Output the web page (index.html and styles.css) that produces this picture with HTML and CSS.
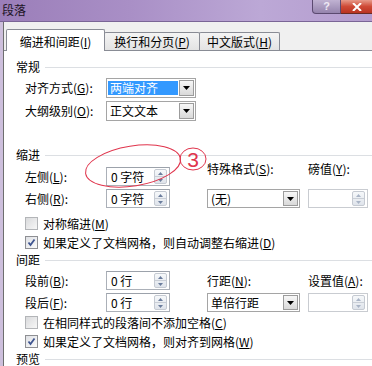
FILE: index.html
```html
<!DOCTYPE html>
<html lang="zh-CN">
<head>
  <meta charset="UTF-8">
  <title>段落</title>
  <link rel="stylesheet" href="styles.css">
</head>
<body>

  <div class="window">
    <div class="titlebar">
      <span class="title">段落</span>
      <div class="caption">
        <span class="btn-help">?</span>
        <span class="btn-close">
          <svg width="10" height="8" viewBox="0 0 10 8"><path d="M1 0 L9 8 M9 0 L1 8" stroke="#fff" stroke-width="2"/></svg>
        </span>
      </div>
    </div>

    <div class="frame">
      <div class="client">
        <!-- tabs -->
        <div class="tabs">
          <div class="tab active tab1">缩进和间距(<u>I</u>)</div>
          <div class="tab tab2">换行和分页(<u>P</u>)</div>
          <div class="tab tab3">中文版式(<u>H</u>)</div>
        </div>

        <div class="panel">
          <div class="group-title">常规</div>
          <div class="form-grid general">
            <span class="label">对齐方式(<u>G</u>):</span>
            <div class="combo">
              <span class="combo-text sel">两端对齐</span>
              <span class="combo-btn"><svg width="7" height="4" viewBox="0 0 7 4"><path d="M0 0 H7 L3.5 4 Z" fill="#000"/></svg></span>
            </div>
            <span class="label">大纲级别(<u>O</u>):</span>
            <div class="combo">
              <span class="combo-text">正文文本</span>
              <span class="combo-btn"><svg width="7" height="4" viewBox="0 0 7 4"><path d="M0 0 H7 L3.5 4 Z" fill="#000"/></svg></span>
            </div>
          </div>

          <div class="group-title gap-indent">缩进</div>
          <div class="form-grid wide indent">
            <span class="label">左侧(<u>L</u>):</span>
            <div class="spin">
              <span class="spin-text">0 字符</span>
              <span class="spin-btns">
                <span><svg width="5" height="3" viewBox="0 0 5 3"><path d="M0 3 H5 L2.5 0 Z" fill="#6a7c9c"/></svg></span>
                <span><svg width="5" height="3" viewBox="0 0 5 3"><path d="M0 0 H5 L2.5 3 Z" fill="#6a7c9c"/></svg></span>
              </span>
            </div>
            <span class="label c4 raised">特殊格式(<u>S</u>):</span>
            <span class="label c6 raised">磅值(<u>Y</u>):</span>

            <span class="label">右侧(<u>R</u>):</span>
            <div class="spin">
              <span class="spin-text">0 字符</span>
              <span class="spin-btns">
                <span><svg width="5" height="3" viewBox="0 0 5 3"><path d="M0 3 H5 L2.5 0 Z" fill="#6a7c9c"/></svg></span>
                <span><svg width="5" height="3" viewBox="0 0 5 3"><path d="M0 0 H5 L2.5 3 Z" fill="#6a7c9c"/></svg></span>
              </span>
            </div>
            <div class="combo c4">
              <span class="combo-text">(无)</span>
              <span class="combo-btn"><svg width="7" height="4" viewBox="0 0 7 4"><path d="M0 0 H7 L3.5 4 Z" fill="#000"/></svg></span>
            </div>
            <div class="spin empty c6">
              <span class="spin-text"></span>
              <span class="spin-btns">
                <span><svg width="5" height="3" viewBox="0 0 5 3"><path d="M0 3 H5 L2.5 0 Z" fill="#a9b4c6"/></svg></span>
                <span><svg width="5" height="3" viewBox="0 0 5 3"><path d="M0 0 H5 L2.5 3 Z" fill="#a9b4c6"/></svg></span>
              </span>
            </div>
          </div>

          <div class="check-row first">
            <span class="check"></span>
            <span>对称缩进(<u>M</u>)</span>
          </div>
          <div class="check-row">
            <span class="check checked"><svg width="9" height="9" viewBox="0 0 9 9"><path d="M1.5 4.5 L3.5 7 L7.5 1.5" fill="none" stroke="#3f5590" stroke-width="1.8"/></svg></span>
            <span>如果定义了文档网格，则自动调整右缩进(<u>D</u>)</span>
          </div>

          <div class="group-title">间距</div>
          <div class="form-grid wide spacing">
            <span class="label">段前(<u>B</u>):</span>
            <div class="spin">
              <span class="spin-text">0 行</span>
              <span class="spin-btns">
                <span><svg width="5" height="3" viewBox="0 0 5 3"><path d="M0 3 H5 L2.5 0 Z" fill="#6a7c9c"/></svg></span>
                <span><svg width="5" height="3" viewBox="0 0 5 3"><path d="M0 0 H5 L2.5 3 Z" fill="#6a7c9c"/></svg></span>
              </span>
            </div>
            <span class="label c4">行距(<u>N</u>):</span>
            <span class="label c6">设置值(<u>A</u>):</span>

            <span class="label">段后(<u>F</u>):</span>
            <div class="spin">
              <span class="spin-text">0 行</span>
              <span class="spin-btns">
                <span><svg width="5" height="3" viewBox="0 0 5 3"><path d="M0 3 H5 L2.5 0 Z" fill="#6a7c9c"/></svg></span>
                <span><svg width="5" height="3" viewBox="0 0 5 3"><path d="M0 0 H5 L2.5 3 Z" fill="#6a7c9c"/></svg></span>
              </span>
            </div>
            <div class="combo c4">
              <span class="combo-text">单倍行距</span>
              <span class="combo-btn"><svg width="7" height="4" viewBox="0 0 7 4"><path d="M0 0 H7 L3.5 4 Z" fill="#000"/></svg></span>
            </div>
            <div class="spin empty c6">
              <span class="spin-text"></span>
              <span class="spin-btns">
                <span><svg width="5" height="3" viewBox="0 0 5 3"><path d="M0 3 H5 L2.5 0 Z" fill="#a9b4c6"/></svg></span>
                <span><svg width="5" height="3" viewBox="0 0 5 3"><path d="M0 0 H5 L2.5 3 Z" fill="#a9b4c6"/></svg></span>
              </span>
            </div>
          </div>

          <div class="check-row second">
            <span class="check"></span>
            <span>在相同样式的段落间不添加空格(<u>C</u>)</span>
          </div>
          <div class="check-row">
            <span class="check checked"><svg width="9" height="9" viewBox="0 0 9 9"><path d="M1.5 4.5 L3.5 7 L7.5 1.5" fill="none" stroke="#3f5590" stroke-width="1.8"/></svg></span>
            <span>如果定义了文档网格，则对齐到网格(<u>W</u>)</span>
          </div>

          <div class="group-title">预览</div>
        </div>
      </div>
    </div>

    <!-- red hand-drawn note over the dialog -->
    <svg class="annotation" width="372" height="366" viewBox="0 0 372 366">
      <ellipse cx="133" cy="166" rx="48" ry="20" transform="rotate(-9 133 166)" fill="none" stroke="#e0344c" stroke-width="1"/>
      <ellipse cx="193" cy="159" rx="13" ry="11" fill="none" stroke="#e0344c" stroke-width="1"/>
      <text x="193" y="167" text-anchor="middle" class="note-num">3</text>
    </svg>
  </div>

</body>
</html>
```

FILE: styles.css
```css
* {
  box-sizing: border-box;
}

body {
  margin: 0;
  font-family: "Noto Sans CJK SC", "Noto Sans", sans-serif;
  font-size: 12px;
  color: #000;
}

u {
  text-decoration: underline;
}

.window {
  position: relative;
  width: 372px;
  height: 366px;
  overflow: hidden;
  background: #cdbfdc;
  display: flex;
  flex-direction: column;
}

/* title bar */
.titlebar {
  height: 22px;
  flex: none;
  display: flex;
  justify-content: space-between;
  background: linear-gradient(to right, #9b7eb9 0%, #a98fc6 35%, #bca8d6 70%, #b49dcf 100%);
  border-bottom: 1px solid #7a6596;
}

.title {
  padding-left: 2px;
  line-height: 20px;
  color: #1d1526;
}

.caption {
  display: flex;
  align-self: flex-start;
}

.btn-help {
  width: 29px;
  height: 14px;
  border: 1px solid #5b4a70;
  border-top: none;
  border-radius: 0 0 0 4px;
  background: linear-gradient(#c0b2d2, #9584ad);
  color: #eee8f4;
  font: bold 11px "Liberation Sans", sans-serif;
  text-align: center;
  line-height: 12px;
}

.btn-close {
  width: 31px;
  height: 14px;
  border-bottom: 1px solid #6a2a22;
  background: linear-gradient(#e79a8a, #cf4a36 50%, #b93322);
  display: flex;
  align-items: center;
  justify-content: center;
}

/* dialog frame */
.frame {
  flex: 1;
  display: flex;
  padding-left: 3px;
}

.client {
  flex: 1;
  display: flex;
  flex-direction: column;
  background: #f0f0f0;
  border-left: 1px solid #6e6e6e;
}

.tabs {
  height: 28px;
  display: flex;
  align-items: flex-end;
  padding-left: 2px;
}

.tab {
  height: 18px;
  line-height: 17px;
  border: 1px solid #898c95;
  border-bottom: none;
  border-radius: 2px 2px 0 0;
  background: linear-gradient(#f4f4f4, #e3e3e3);
  text-align: center;
  white-space: nowrap;
  margin-left: -1px;
}

.tab1 {
  width: 99px;
  margin-left: 0;
}

.tab2 {
  width: 96px;
}

.tab3 {
  width: 81px;
}

.tab.active {
  height: 22px;
  margin-bottom: -1px;
  padding-top: 4px;
  line-height: 16px;
  background: #fff;
  position: relative;
  z-index: 1;
}

.panel {
  flex: 1;
  background: #fff;
  border-top: 1px solid #898c95;
  position: relative;
  padding-top: 8px;
}

/* section headers with a rule */
.group-title {
  height: 16px;
  display: flex;
  align-items: center;
  padding-left: 12px;
  line-height: 16px;
}

.group-title::after {
  content: "";
  flex: 1;
  height: 1px;
  background: #dcdfe3;
  margin-left: 5px;
}

.gap-indent {
  margin-top: 26px;
}

.form-grid {
  display: grid;
  padding-left: 21px;
  grid-template-columns: 81px 90px;
  grid-auto-rows: 20px;
  row-gap: 3px;
  margin-top: 3px;
}

.form-grid.wide {
  grid-template-columns: 81px 64px 37px 93px 8px 60px;
  grid-auto-rows: 19px;
}

.form-grid.indent {
  margin-top: 4px;
}

.label {
  align-self: center;
  line-height: 16px;
  white-space: nowrap;
}

.label.raised {
  align-self: start;
  margin-top: -6px;
}

.c4 {
  grid-column: 4;
}

.c6 {
  grid-column: 6;
}

/* combo box */
.combo {
  display: flex;
  border: 1px solid #a5a5a5;
  background: #fff;
  padding: 1px;
}

.combo-text {
  flex: 1;
  padding-left: 2px;
  line-height: 16px;
  white-space: nowrap;
}

.combo-text.sel {
  background: #3399ff;
  color: #fff;
  margin: 1px 1px 1px 0;
  line-height: 14px;
}

.combo-btn {
  width: 15px;
  border: 1px solid #9c9c9c;
  background: linear-gradient(#f7f7f7, #d9d9d9);
  display: flex;
  align-items: center;
  justify-content: center;
}

/* spin box */
.spin {
  display: flex;
  border: 1px solid #abb0b8;
  border-top-color: #9ca2ab;
  background: #fff;
  padding: 1px;
}

.spin.empty {
  border-color: #c9ccd1;
}

.spin-text {
  flex: 1;
  padding-left: 3px;
  line-height: 15px;
  white-space: nowrap;
}

.spin-btns {
  width: 13px;
  display: flex;
  flex-direction: column;
  border: 1px solid #c5cad2;
  border-radius: 2px;
  background: linear-gradient(#f6f8fa, #dfe4eb);
  margin-right: 1px;
}

.spin-btns span {
  flex: 1;
  display: flex;
  align-items: center;
  justify-content: center;
}

.spin-btns span + span {
  border-top: 1px solid #c9ced6;
}

/* checkbox rows */
.check-row {
  height: 19px;
  display: flex;
  align-items: center;
  gap: 5px;
  padding-left: 21px;
  line-height: 16px;
  white-space: nowrap;
}

.check-row.first {
  margin-top: 6px;
}

.check-row.second {
  margin-top: 1px;
}

.check {
  width: 13px;
  height: 13px;
  border: 1px solid #b3b5b8;
  background: linear-gradient(135deg, #d9dadc, #f7f7f7);
  display: flex;
  align-items: center;
  justify-content: center;
}

.check.checked {
  border-color: #8e8f93;
  background: linear-gradient(135deg, #dfe1e5, #fafafa);
}

/* annotation overlay */
.annotation {
  position: absolute;
  left: 0;
  top: 0;
  pointer-events: none;
}

.note-num {
  fill: #e0344c;
  font-family: "Liberation Sans", sans-serif;
  font-size: 21px;
}
```
